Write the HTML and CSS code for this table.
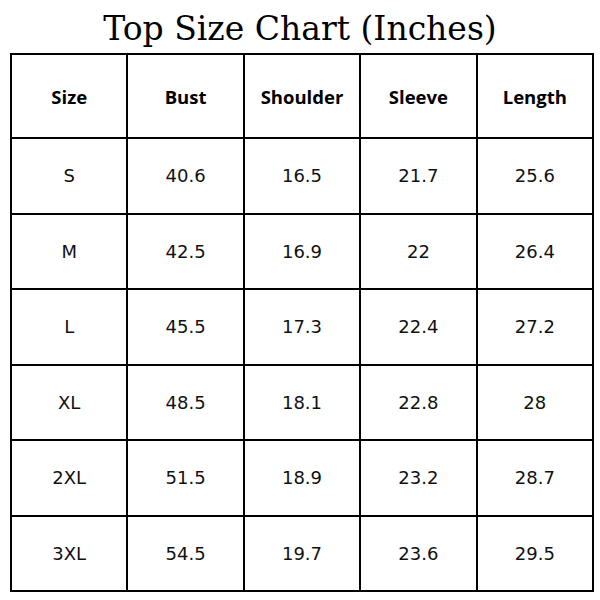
FILE: index.html
```html
<!DOCTYPE html>
<html>
<head>
<meta charset="utf-8">
<link rel="stylesheet" href="styles.css">
</head>
<body>
<h1 class="title">Top Size Chart (Inches)</h1>
<div class="chart">
  <div class="cell head">Size</div><div class="cell head">Bust</div><div class="cell head">Shoulder</div><div class="cell head">Sleeve</div><div class="cell head">Length</div>
  <div class="cell">S</div><div class="cell">40.6</div><div class="cell">16.5</div><div class="cell">21.7</div><div class="cell">25.6</div>
  <div class="cell">M</div><div class="cell">42.5</div><div class="cell">16.9</div><div class="cell">22</div><div class="cell">26.4</div>
  <div class="cell">L</div><div class="cell">45.5</div><div class="cell">17.3</div><div class="cell">22.4</div><div class="cell">27.2</div>
  <div class="cell">XL</div><div class="cell">48.5</div><div class="cell">18.1</div><div class="cell">22.8</div><div class="cell">28</div>
  <div class="cell">2XL</div><div class="cell">51.5</div><div class="cell">18.9</div><div class="cell">23.2</div><div class="cell">28.7</div>
  <div class="cell">3XL</div><div class="cell">54.5</div><div class="cell">19.7</div><div class="cell">23.6</div><div class="cell">29.5</div>
</div>
</body>
</html>
```
FILE: styles.css
```css
html, body {
  margin: 0;
  padding: 0;
  background: #fff;
}
body {
  width: 600px;
  height: 600px;
  overflow: hidden;
}
.title {
  margin: 0;
  height: 53px;
  font-family: "DejaVu Serif", serif;
  font-weight: 400;
  font-size: 33px;
  line-height: 57px;
  text-align: center;
  color: #000;
}
.chart {
  margin-left: 10px;
  width: 584px;
  height: 539px;
  box-sizing: border-box;
  padding: 2px;
  background: #000;
  display: grid;
  grid-template-columns: repeat(5, 1fr);
  grid-template-rows: 82px repeat(6, 1fr);
  gap: 2px;
}
.cell {
  background: #fff;
  display: flex;
  align-items: center;
  justify-content: center;
  font-family: "DejaVu Sans", sans-serif;
  font-size: 18px;
  color: #111;
}
.cell.head {
  font-family: "Open Sans", sans-serif;
  font-weight: 700;
  font-size: 18.5px;
  color: #000;
}
```
